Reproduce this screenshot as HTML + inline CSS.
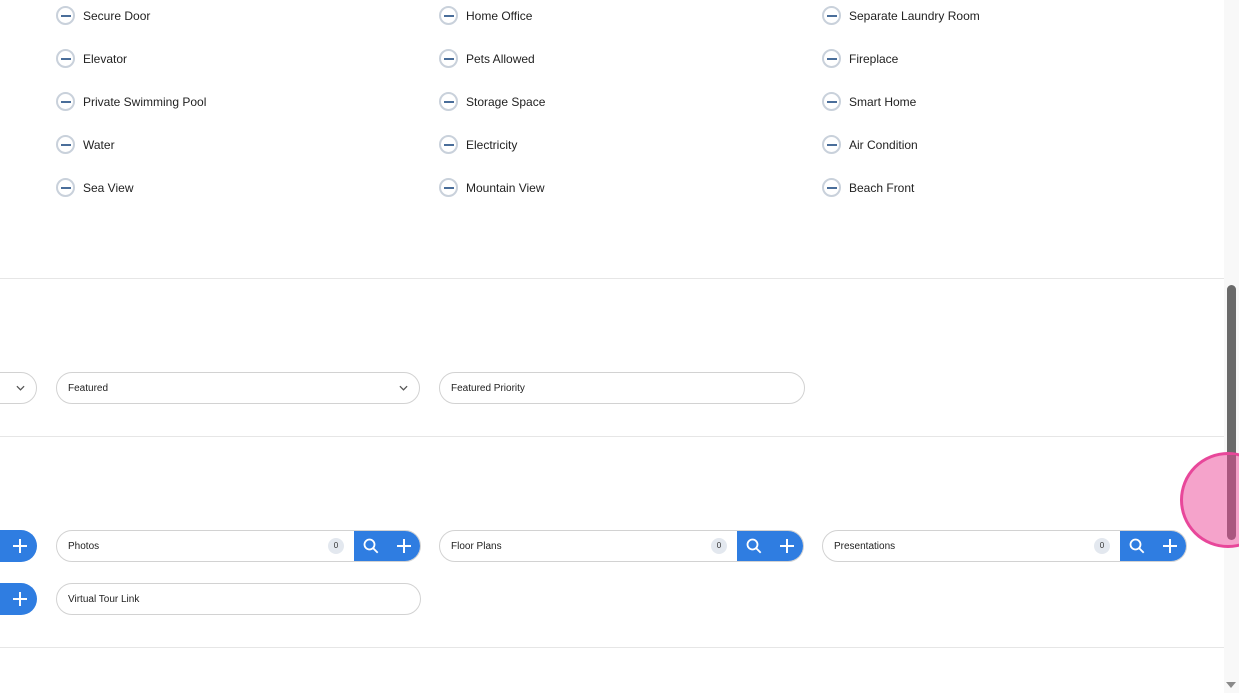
<!DOCTYPE html>
<html><head><meta charset="utf-8"><style>
*{margin:0;padding:0;box-sizing:border-box}
body{width:1239px;height:693px;overflow:hidden;background:#fff;font-family:"Liberation Sans",Arial,sans-serif;position:relative;color:#222}
.a{position:absolute;font-size:12px;line-height:19px}
.a i{position:absolute;left:0;top:0;width:19px;height:19px;border:2px solid #c9d1db;border-radius:50%}
.a i:after{content:"";position:absolute;left:2.5px;top:6.5px;width:10px;height:2px;background:#4a6e9a}
.a span{position:absolute;left:27px;top:1px;white-space:nowrap}
.hr{position:absolute;left:0;width:1224px;height:1px;background:#e6e6e6}
.f{position:absolute;height:32px;border:1px solid #d2d2d2;border-radius:16px;font-size:10px;line-height:32px;padding-left:11px;background:#fff;overflow:hidden}
.chev{position:absolute;right:11px;top:12px}
.btn{position:absolute;right:-1px;top:-1px;height:32px;width:67px;background:#2f7de1;border-radius:0 16px 16px 0}
.badge{position:absolute;top:7px;width:16px;height:16px;border-radius:50%;background:#e3e8ef;font-size:8px;line-height:16px;text-align:center;color:#333}
.pb{position:absolute;height:32px;background:#2f7de1;border-radius:0 16px 16px 0}
</style></head><body>
<div class="a" style="left:56px;top:6px"><i></i><span>Secure Door</span></div>
<div class="a" style="left:56px;top:49px"><i></i><span>Elevator</span></div>
<div class="a" style="left:56px;top:92px"><i></i><span>Private Swimming Pool</span></div>
<div class="a" style="left:56px;top:135px"><i></i><span>Water</span></div>
<div class="a" style="left:56px;top:178px"><i></i><span>Sea View</span></div>
<div class="a" style="left:439px;top:6px"><i></i><span>Home Office</span></div>
<div class="a" style="left:439px;top:49px"><i></i><span>Pets Allowed</span></div>
<div class="a" style="left:439px;top:92px"><i></i><span>Storage Space</span></div>
<div class="a" style="left:439px;top:135px"><i></i><span>Electricity</span></div>
<div class="a" style="left:439px;top:178px"><i></i><span>Mountain View</span></div>
<div class="a" style="left:822px;top:6px"><i></i><span>Separate Laundry Room</span></div>
<div class="a" style="left:822px;top:49px"><i></i><span>Fireplace</span></div>
<div class="a" style="left:822px;top:92px"><i></i><span>Smart Home</span></div>
<div class="a" style="left:822px;top:135px"><i></i><span>Air Condition</span></div>
<div class="a" style="left:822px;top:178px"><i></i><span>Beach Front</span></div>

<div class="hr" style="top:278px"></div>
<div class="hr" style="top:436px"></div>
<div class="hr" style="top:647px"></div>

<svg width="0" height="0" style="position:absolute"><defs>
<symbol id="ch" viewBox="0 0 10 6"><path d="M1 1l4 4 4-4" fill="none" stroke="#555" stroke-width="1.4"/></symbol>
<symbol id="pl" viewBox="0 0 16 16"><path d="M8 1v14M1 8h14" stroke="#fff" stroke-width="2"/></symbol>
<symbol id="sr" viewBox="0 0 16 16"><circle cx="6.5" cy="6.5" r="5" fill="none" stroke="#fff" stroke-width="1.8"/><path d="M10.2 10.2l4.5 4.5" stroke="#fff" stroke-width="1.8"/></symbol>
</defs></svg>

<div class="f" style="left:-330px;top:372px;width:367px"><svg class="chev" width="9" height="6"><use href="#ch"/></svg></div>
<div class="f" style="left:56px;top:372px;width:364px">Featured<svg class="chev" width="9" height="6"><use href="#ch"/></svg></div>
<div class="f" style="left:439px;top:372px;width:366px">Featured Priority</div>

<div class="pb" style="left:0;top:530px;width:37px"><svg style="position:absolute;left:12px;top:8px" width="16" height="16"><use href="#pl"/></svg></div>
<div class="pb" style="left:0;top:583px;width:37px"><svg style="position:absolute;left:12px;top:8px" width="16" height="16"><use href="#pl"/></svg></div>

<div class="f" style="left:56px;top:530px;width:365px">Photos<span class="badge" style="left:271px">0</span><div class="btn"><svg style="position:absolute;left:9px;top:8px" width="16" height="16"><use href="#sr"/></svg><svg style="position:absolute;left:42px;top:8px" width="16" height="16"><use href="#pl"/></svg></div></div>
<div class="f" style="left:439px;top:530px;width:365px">Floor Plans<span class="badge" style="left:271px">0</span><div class="btn"><svg style="position:absolute;left:9px;top:8px" width="16" height="16"><use href="#sr"/></svg><svg style="position:absolute;left:42px;top:8px" width="16" height="16"><use href="#pl"/></svg></div></div>
<div class="f" style="left:822px;top:530px;width:365px">Presentations<span class="badge" style="left:271px">0</span><div class="btn"><svg style="position:absolute;left:9px;top:8px" width="16" height="16"><use href="#sr"/></svg><svg style="position:absolute;left:42px;top:8px" width="16" height="16"><use href="#pl"/></svg></div></div>
<div class="f" style="left:56px;top:583px;width:365px">Virtual Tour Link</div>

<div style="position:absolute;left:1224px;top:0;width:15px;height:693px;background:#f8f8f8"></div>
<div style="position:absolute;left:1227px;top:285px;width:9px;height:180px;background:#6a6a6a;border-radius:5px 5px 0 0"></div>
<div style="position:absolute;left:1180px;top:452px;width:96px;height:96px;border-radius:50%;background:#f5a3cb;border:3px solid #e8479a"></div>
<div style="position:absolute;left:1227px;top:455px;width:9px;height:85px;background:#a9577f;border-radius:0 0 5px 5px"></div>
<div style="position:absolute;left:1226px;top:682px;width:0;height:0;border-left:5px solid transparent;border-right:5px solid transparent;border-top:6px solid #8a8a8a"></div>
</body></html>
